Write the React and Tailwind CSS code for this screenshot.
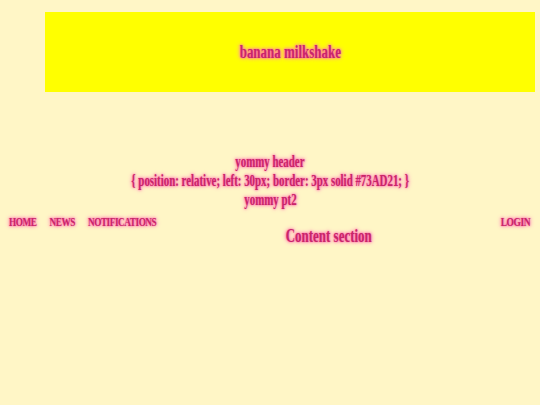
export default function App() {
  const glow = "text-[#c8266a] font-bold [font-family:'Liberation_Serif',serif] [text-shadow:0_0_2px_#ff5aa2,0_0_4px_#ff70ae,0_0_6px_#ffa0c8]";

  return (
    <div className="min-h-[405px] w-[540px] bg-[#fff6c6] pt-3">
      <div className="ml-[45px] mr-[5px] flex h-[80px] items-center justify-center bg-[#ffff00]">
        <span className={`inline-block scale-x-[0.72] text-[18px] ${glow}`}>banana milkshake</span>
      </div>

      <div className="mt-[60px] flex flex-col items-center text-[16px] leading-[19px]">
        <span className={`inline-block scale-x-[0.68] whitespace-nowrap ${glow}`}>yommy header</span>
        <span className={`inline-block scale-x-[0.68] whitespace-nowrap ${glow}`}>
          {'{ position: relative; left: 30px; border: 3px solid #73AD21; }'}
        </span>
        <span className={`inline-block scale-x-[0.68] whitespace-nowrap ${glow}`}>yommy pt2</span>
      </div>

      <div className="mt-[5px] flex items-start px-[10px] pl-[9px]">
        <div className="w-[148px]">
          <div className="flex origin-left scale-x-[0.77] gap-[17px] whitespace-nowrap text-[12px] leading-[16px]">
            <span className={`inline-block shrink-0 tracking-[-0.6px] ${glow}`}>HOME</span>
            <span className={`inline-block shrink-0 tracking-[-0.6px] ${glow}`}>NEWS</span>
            <span className={`inline-block shrink-0 tracking-[-0.6px] ${glow}`}>NOTIFICATIONS</span>
          </div>
        </div>
        <div className="flex flex-1 justify-center pt-[11px]">
          <span className={`inline-block scale-x-[0.72] whitespace-nowrap text-[18px] leading-[22px] ${glow}`}>Content section</span>
        </div>
        <div className="flex w-[30px] justify-end">
          <span className={`inline-block shrink-0 origin-right scale-x-[0.79] whitespace-nowrap text-[12px] leading-[16px] tracking-[-0.6px] ${glow}`}>LOGIN</span>
        </div>
      </div>
    </div>
  );
}
